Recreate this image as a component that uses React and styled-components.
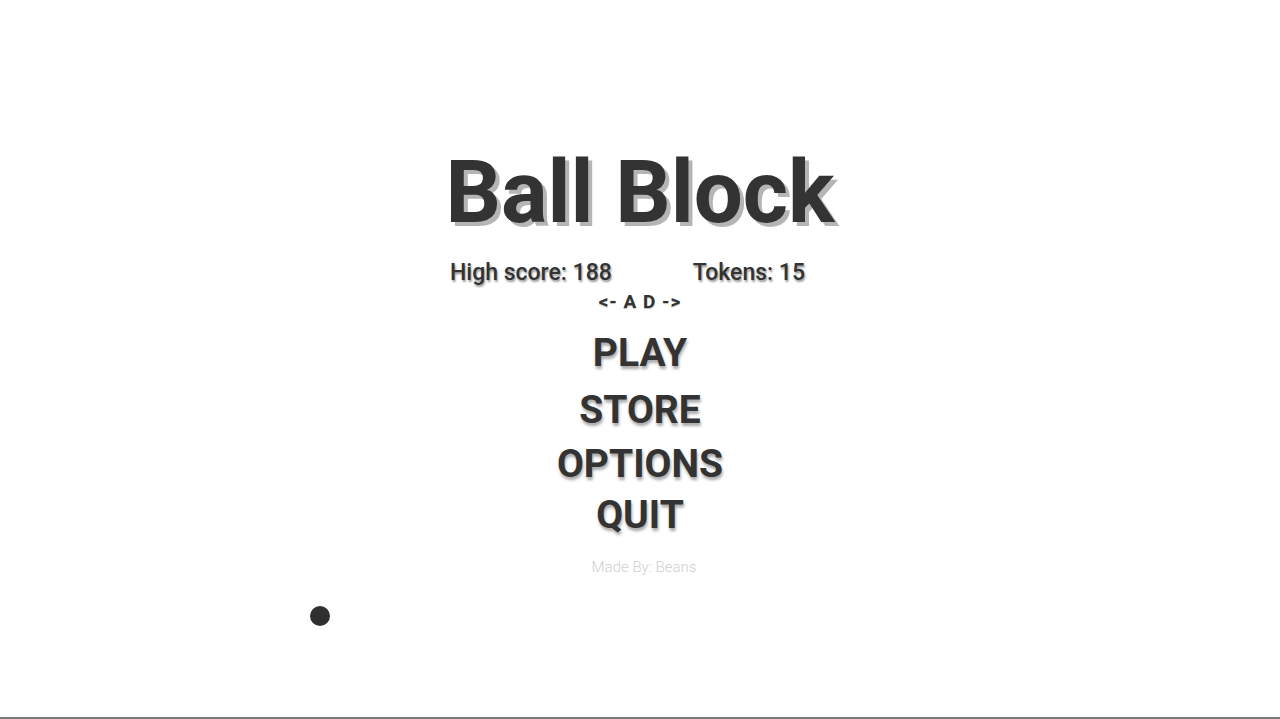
import styled, { createGlobalStyle } from 'styled-components';

const GlobalStyle = createGlobalStyle`
    html, body {
        margin: 0;
        padding: 0;
        background: #fff;
        font-family: Roboto, "Liberation Sans", sans-serif;
        color: #333;
    }
`;

const Screen = styled.div`
    position: relative;
    width: 100vw;
    height: 719px;
    box-sizing: border-box;
    border-bottom: 2px solid #7a7a7a;
    overflow: hidden;

    display: flex;
    flex-direction: column;
    align-items: center;
    padding-top: 140px;
`;

const Title = styled.h1`
    margin: 0;
    font-size: 87px;
    font-weight: 700;
    line-height: 104px;
    color: #333;
    text-shadow: 4px 4px 0 #b5b5b5;
`;

const Stats = styled.div`
    display: flex;
    gap: 81px;
    margin-top: 14px;
    margin-left: -25px;
`;

const Stat = styled.span`
    font-size: 23px;
    font-weight: 500;
    line-height: 30px;
    text-shadow: 1px 2px 2px #999;
`;

const Hint = styled.div`
    margin-top: 1px;
    font-size: 19px;
    font-weight: 700;
    line-height: 25px;
    letter-spacing: 1px;
    text-shadow: 0 1px 1px #bbb;
`;

const Menu = styled.nav`
    display: flex;
    flex-direction: column;
    align-items: center;
    margin-top: 10px;
`;

const MenuItem = styled.button`
    border: none;
    background: none;
    padding: 0;
    font-family: inherit;
    font-size: 39px;
    font-weight: 700;
    color: #333;
    line-height: ${(p) => p.$h}px;
    text-shadow: 1px 3px 3px #aaa;
    cursor: pointer;
`;

const Credit = styled.div`
    margin-top: 18px;
    margin-left: 8px;
    font-size: 15px;
    font-weight: 300;
    color: #cfcfcf;
`;

const Ball = styled.div`
    position: absolute;
    left: 310px;
    top: 606px;
    width: 20px;
    height: 20px;
    border-radius: 50%;
    background: #2f2f2f;
`;

const App = () => {
    return (
        <>
            <GlobalStyle />
            <Screen>
                <Title>Ball Block</Title>
                <Stats>
                    <Stat>High score: 188</Stat>
                    <Stat>Tokens: 15</Stat>
                </Stats>
                <Hint>&lt;- A D -&gt;</Hint>
                <Menu>
                    <MenuItem $h={58}>PLAY</MenuItem>
                    <MenuItem $h={56}>STORE</MenuItem>
                    <MenuItem $h={52}>OPTIONS</MenuItem>
                    <MenuItem $h={50}>QUIT</MenuItem>
                </Menu>
                <Credit>Made By: Beans</Credit>
                <Ball />
            </Screen>
        </>
    )
}

export default App;
